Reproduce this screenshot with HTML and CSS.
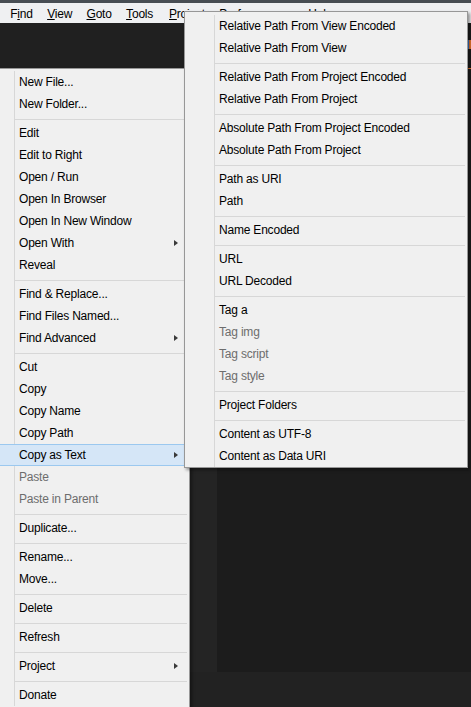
FILE: index.html
```html
<!DOCTYPE html>
<html>
<head>
<meta charset="utf-8">
<link rel="stylesheet" href="styles.css">
</head>
<body>
<div class="window">
  <div class="titlebar"></div>
  <nav class="menubar">
    <span class="mb-item">F<u>i</u>nd</span>
    <span class="mb-item"><u>V</u>iew</span>
    <span class="mb-item"><u>G</u>oto</span>
    <span class="mb-item"><u>T</u>ools</span>
    <span class="mb-item mb-project"><u>P</u>roject</span>
    <span class="mb-item">Prefere<u>n</u>ces</span>
    <span class="mb-item mb-help"><u>H</u>elp</span>
  </nav>
  <div class="tabbar">
    <div class="tab"><span class="tab-icon"></span></div>
  </div>
  <div class="workspace">
    <aside class="sidebar"></aside>
    <section class="editor">
      <div class="gutter"></div>
      <div class="code"></div>
    </section>
  </div>
  <div class="statusbar"></div>
</div>

<div class="menu menu-main">
  <div class="menu-body">
    <div class="item"><span class="label">New File...</span></div>
    <div class="item"><span class="label">New Folder...</span></div>
    <div class="sep"></div>
    <div class="item"><span class="label">Edit</span></div>
    <div class="item"><span class="label">Edit to Right</span></div>
    <div class="item"><span class="label">Open / Run</span></div>
    <div class="item"><span class="label">Open In Browser</span></div>
    <div class="item"><span class="label">Open In New Window</span></div>
    <div class="item"><span class="label">Open With</span><span class="arrow"></span></div>
    <div class="item"><span class="label">Reveal</span></div>
    <div class="sep"></div>
    <div class="item"><span class="label">Find &amp; Replace...</span></div>
    <div class="item"><span class="label">Find Files Named...</span></div>
    <div class="item"><span class="label">Find Advanced</span><span class="arrow"></span></div>
    <div class="sep"></div>
    <div class="item"><span class="label">Cut</span></div>
    <div class="item"><span class="label">Copy</span></div>
    <div class="item"><span class="label">Copy Name</span></div>
    <div class="item"><span class="label">Copy Path</span></div>
    <div class="item active"><span class="label">Copy as Text</span><span class="arrow"></span></div>
    <div class="item disabled"><span class="label">Paste</span></div>
    <div class="item disabled"><span class="label">Paste in Parent</span></div>
    <div class="sep"></div>
    <div class="item"><span class="label">Duplicate...</span></div>
    <div class="sep"></div>
    <div class="item"><span class="label">Rename...</span></div>
    <div class="item"><span class="label">Move...</span></div>
    <div class="sep"></div>
    <div class="item"><span class="label">Delete</span></div>
    <div class="sep"></div>
    <div class="item"><span class="label">Refresh</span></div>
    <div class="sep"></div>
    <div class="item"><span class="label">Project</span><span class="arrow"></span></div>
    <div class="sep"></div>
    <div class="item"><span class="label">Donate</span></div>
  </div>
</div>

<div class="menu menu-sub">
  <div class="menu-body">
    <div class="item"><span class="label">Relative Path From View Encoded</span></div>
    <div class="item"><span class="label">Relative Path From View</span></div>
    <div class="sep"></div>
    <div class="item"><span class="label">Relative Path From Project Encoded</span></div>
    <div class="item"><span class="label">Relative Path From Project</span></div>
    <div class="sep"></div>
    <div class="item"><span class="label">Absolute Path From Project Encoded</span></div>
    <div class="item"><span class="label">Absolute Path From Project</span></div>
    <div class="sep"></div>
    <div class="item"><span class="label">Path as URI</span></div>
    <div class="item"><span class="label">Path</span></div>
    <div class="sep"></div>
    <div class="item"><span class="label">Name Encoded</span></div>
    <div class="sep"></div>
    <div class="item"><span class="label">URL</span></div>
    <div class="item"><span class="label">URL Decoded</span></div>
    <div class="sep"></div>
    <div class="item"><span class="label">Tag a</span></div>
    <div class="item disabled"><span class="label">Tag img</span></div>
    <div class="item disabled"><span class="label">Tag script</span></div>
    <div class="item disabled"><span class="label">Tag style</span></div>
    <div class="sep"></div>
    <div class="item"><span class="label">Project Folders</span></div>
    <div class="sep"></div>
    <div class="item"><span class="label">Content as UTF-8</span></div>
    <div class="item"><span class="label">Content as Data URI</span></div>
  </div>
</div>
</body>
</html>
```

FILE: styles.css
```css
* { box-sizing: border-box; }

html, body {
  margin: 0;
  height: 100%;
  overflow: hidden;
}

body {
  position: relative;
  font-family: "Liberation Sans", Arial, sans-serif;
  font-size: 12px;
  letter-spacing: -0.2px;
  color: #000;
  background: #222;
}

.window {
  display: flex;
  flex-direction: column;
  height: 100vh;
}

.titlebar {
  height: 3px;
  background: #474d53;
  flex: none;
}

.menubar {
  flex: none;
  height: 20px;
  display: flex;
  align-items: flex-start;
  padding-left: 3px;
  background: #eff0f2;
  overflow: hidden;
}

.mb-item {
  padding: 1px 7.2px 0;
  line-height: 20px;
  white-space: nowrap;
}

.mb-project { margin-left: 1.5px; }

.mb-help { margin-left: 12px; }

.tabbar {
  flex: none;
  height: 46px;
  display: flex;
  justify-content: flex-end;
  background: #202020;
}

.tab {
  width: 170px;
  display: flex;
  justify-content: flex-end;
  align-items: flex-start;
  padding-top: 17px;
  border-bottom: 1px solid #e8772e;
  background: #1b1b1b;
}

.tab-icon {
  width: 8px;
  height: 9px;
  background: linear-gradient(to right, #3a7bd5 0 6px, #e8772e 6px);
}

.workspace {
  flex: 1;
  display: flex;
  min-height: 0;
}

.sidebar {
  width: 190px;
  background: #222;
}

.editor {
  flex: 1;
  display: flex;
}

.gutter {
  width: 27px;
  background: #242424;
}

.code {
  flex: 1;
  background: #1c1c1c;
}

.statusbar {
  flex: none;
  height: 35px;
  background: #222;
}

/* Context menus */
.menu {
  position: absolute;
  background: #f0f0f0;
  border: 1px solid #979797;
  padding: 2px;
  box-shadow: 2px 2px 3px rgba(0, 0, 0, 0.4);
}

.menu-main {
  left: -16px;
  top: 68px;
  width: 206px;
}

.menu-sub {
  left: 184px;
  top: 11px;
  width: 284px;
  padding: 3px 2px 0;
}

.menu-body {
  background: linear-gradient(#d7d7d7, #d7d7d7) 27px 0 / 1px 100% no-repeat;
}

.item {
  height: 22px;
  display: flex;
  align-items: center;
  padding: 0 9px 0 32px;
  white-space: nowrap;
}

.label {
  flex: 1;
  line-height: 22px;
}

.item.disabled { color: #6d6d6d; }

.item.active {
  background: #d5e6f7;
  border: 1px solid #9bc8ef;
  padding-left: 31px;
  padding-right: 8px;
}

.arrow {
  width: 0;
  height: 0;
  border-left: 4px solid #3a3a3a;
  border-top: 3px solid transparent;
  border-bottom: 3px solid transparent;
}

.sep {
  height: 1px;
  margin: 4px 0 2px 28px;
  background: #d7d7d7;
}
```
